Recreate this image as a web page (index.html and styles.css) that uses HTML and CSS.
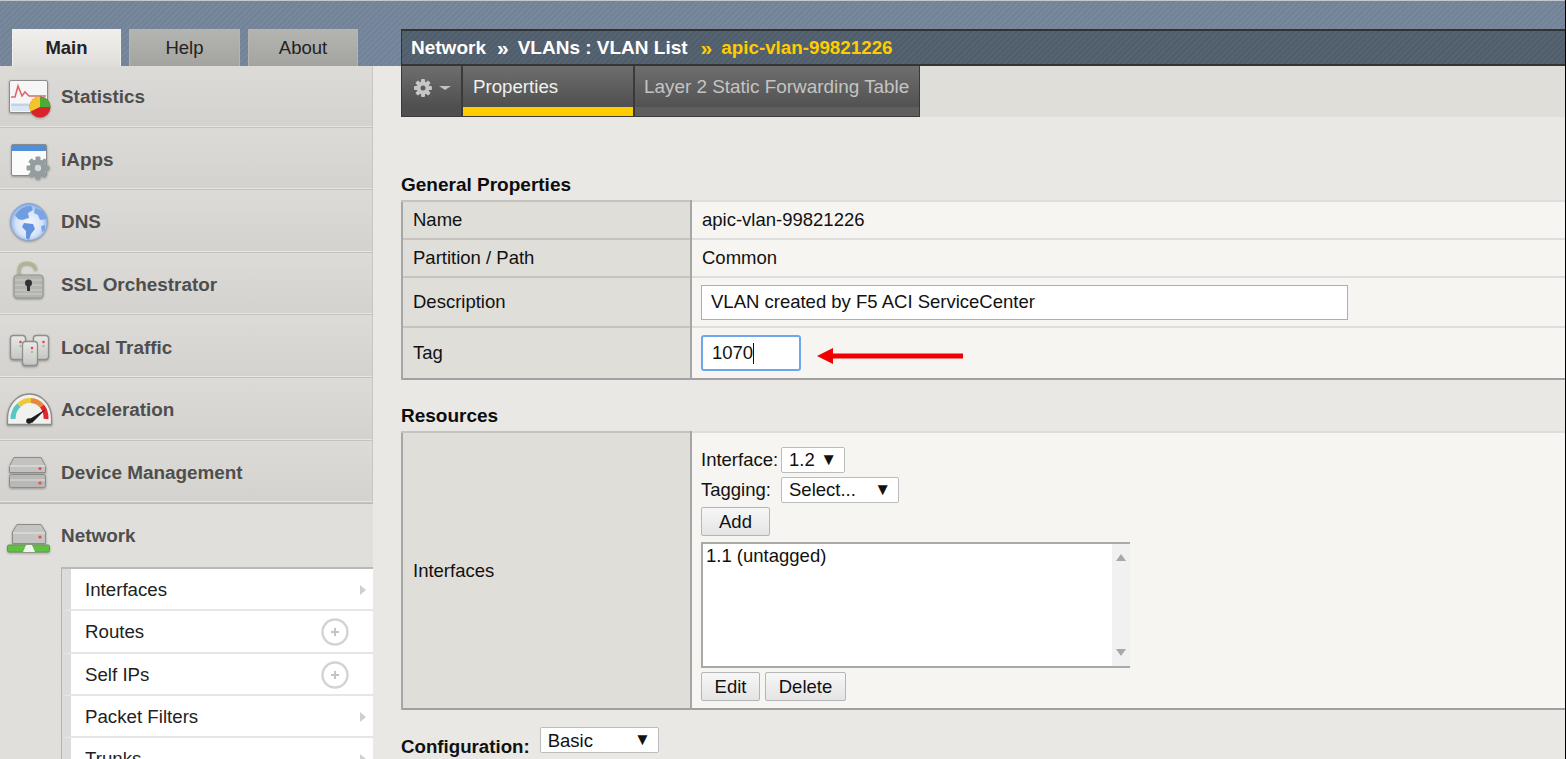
FILE: index.html
```html
<!DOCTYPE html>
<html lang="en">
<head>
  <meta charset="UTF-8"/>
  <title>Network : VLANs : VLAN List</title>
  <meta name="viewport" content="width=device-width, initial-scale=1.0"/>
  <link rel="stylesheet" href="styles.css">
</head>
<body>
  <div class="page">
    <!-- top band -->
    <div class="topbar">
      <div class="tabs">
        <div class="tab active">Main</div>
        <div class="tab">Help</div>
        <div class="tab last">About</div>
      </div>
      <div class="crumbs">
        <span>Network</span><span class="sep">&raquo;</span><span>VLANs : VLAN List</span><span class="sep cur">&raquo;</span><span class="cur name">apic-vlan-99821226</span>
      </div>
    </div>

    <div class="layout">
      <!-- left menu -->
      <div class="sidebar">
        <div class="nav-item">
          <svg class="nav-icon" width="56" height="56" viewBox="0 0 56 56">
            <rect x="5.5" y="11.5" width="38" height="32" rx="1.5" fill="#f6f6f6" stroke="#8d8d8d"/>
            <rect x="7" y="34" width="35" height="8" fill="#dbe6f2"/>
            <path d="M7 28 L11 28 L14 17 L18 27 L21 23 L25 27 L42 27" fill="none" stroke="#d9686c" stroke-width="1.6"/>
            <path d="M7 36 H30" stroke="#b9cde2" stroke-width="1.5"/>
            <circle cx="36" cy="38" r="10.5" fill="#d8232b"/>
            <path d="M36 38 L36 27.5 A10.5 10.5 0 0 1 46.5 38 Z" fill="#4cab34"/>
            <path d="M36 38 L36 27.5 A10.5 10.5 0 0 0 26.5 42.5 Z" fill="#f3c52c"/>
          </svg>
          <span>Statistics</span>
        </div>
        <div class="nav-item">
          <svg class="nav-icon" width="56" height="56" viewBox="0 0 56 56">
            <rect x="7.5" y="12.5" width="35" height="31" rx="1.5" fill="#fbfbfb" stroke="#8a8a8a"/>
            <rect x="8" y="13" width="34" height="6" fill="#4f8fd8"/>
            <g fill="#949e9e">
              <circle cx="34" cy="36" r="8.5"/>
              <rect x="31.5" y="24.5" width="5" height="23" rx="1"/>
              <rect x="22.5" y="33.5" width="23" height="5" rx="1"/>
              <rect x="31.5" y="24.5" width="5" height="23" rx="1" transform="rotate(45 34 36)"/>
              <rect x="31.5" y="24.5" width="5" height="23" rx="1" transform="rotate(-45 34 36)"/>
            </g>
            <circle cx="34" cy="36" r="3.2" fill="#d4d8d8"/>
          </svg>
          <span>iApps</span>
        </div>
        <div class="nav-item">
          <svg class="nav-icon" width="56" height="56" viewBox="0 0 56 56">
            <defs>
              <radialGradient id="globe" cx="50%" cy="55%" r="55%">
                <stop offset="0" stop-color="#f4f7fd"/>
                <stop offset="0.65" stop-color="#d5e3f8"/>
                <stop offset="1" stop-color="#7ea6e2"/>
              </radialGradient>
            </defs>
            <circle cx="25" cy="28" r="18.5" fill="url(#globe)" stroke="#8ba6cf"/>
            <path d="M11 21 Q17 12 27 12 L29 16 L24 19 L25 24 L18 26 L14 25 Z" fill="#6f9de2"/>
            <path d="M20 29 L29 30 L31 35 L27 40 L25 46 L22 44 L22 37 L18 33 Z" fill="#6393dc"/>
            <path d="M31 14 L39 17 L43 25 L36 26 L34 21 L30 19 Z" fill="#7aa5e5"/>
            <path d="M37 32 L41 31 L41 36 L38 38 Z" fill="#7aa5e5"/>
          </svg>
          <span>DNS</span>
        </div>
        <div class="nav-item">
          <svg class="nav-icon" width="56" height="56" viewBox="0 0 56 56">
            <path d="M15 19 V13 Q15 6 23 6 Q31 6 32 13" fill="none" stroke="#b3b58f" stroke-width="3"/>
            <rect x="10" y="18" width="29" height="23" rx="3" fill="#b4b4b1" stroke="#949492"/>
            <path d="M11 23 H38 M11 28 H38 M11 33 H38 M11 37 H38" stroke="#cdcdca"/>
            <circle cx="24.5" cy="26" r="3.5" fill="#333"/>
            <rect x="23" y="27" width="3" height="7" fill="#333"/>
          </svg>
          <span>SSL Orchestrator</span>
        </div>
        <div class="nav-item">
          <svg class="nav-icon" width="56" height="56" viewBox="0 0 56 56">
            <defs>
              <linearGradient id="srv" x1="0" y1="0" x2="0" y2="1">
                <stop offset="0" stop-color="#e8e8e6"/>
                <stop offset="1" stop-color="#c6c6c4"/>
              </linearGradient>
            </defs>
            <g fill="url(#srv)" stroke="#8e8e8c" stroke-width="1.3">
              <rect x="6.5" y="15.5" width="15" height="24" rx="3"/>
              <rect x="29.5" y="15.5" width="15" height="24" rx="3"/>
              <rect x="18.5" y="21.5" width="15" height="24" rx="3"/>
            </g>
            <g fill="#e8474b">
              <circle cx="16.5" cy="22" r="1.3"/><circle cx="39.5" cy="22" r="1.3"/><circle cx="28" cy="28" r="1.3"/>
            </g>
            <g fill="#7cc46a">
              <circle cx="16.5" cy="26" r="1"/><circle cx="39.5" cy="26" r="1"/><circle cx="28" cy="32" r="1"/>
            </g>
          </svg>
          <span>Local Traffic</span>
        </div>
        <div class="nav-item">
          <svg class="nav-icon" width="56" height="56" viewBox="0 0 56 56">
            <path d="M3.5 42.5 V36 A22 24 0 0 1 47.5 36 V42.5 Z" fill="#f1f1ef" stroke="#8c8c8a" stroke-width="1.3"/>
            <path d="M9 37 A16.5 18 0 0 1 15 23" fill="none" stroke="#57c7c2" stroke-width="5"/>
            <path d="M15 23 A16.5 18 0 0 1 27 18.5" fill="none" stroke="#ecc83a" stroke-width="5"/>
            <path d="M27 18.5 A16.5 18 0 0 1 38 24" fill="none" stroke="#e8883a" stroke-width="5"/>
            <path d="M38 24 A16.5 18 0 0 1 42 37" fill="none" stroke="#e3262b" stroke-width="5"/>
            <path d="M24 38 L42 27 L28 41 Z" fill="#1d1d1d"/>
            <circle cx="25" cy="39" r="2.8" fill="#1d1d1d"/>
          </svg>
          <span>Acceleration</span>
        </div>
        <div class="nav-item">
          <svg class="nav-icon" width="56" height="56" viewBox="0 0 56 56">
            <path d="M5.5 21 L10 12.5 H37 L41.5 21 V27.5 H5.5 Z" fill="#c2c2c0" stroke="#8b8b89"/>
            <path d="M5.5 21 H41.5" stroke="#e8e8e6"/>
            <rect x="5.5" y="29.5" width="36" height="13" rx="2" fill="#b8b8b6" stroke="#8b8b89"/>
            <path d="M6 35 H41" stroke="#dededc"/>
            <circle cx="36" cy="23.5" r="1.6" fill="#ee4a4e"/>
            <circle cx="36" cy="38" r="1.6" fill="#ee4a4e"/>
          </svg>
          <span>Device Management</span>
        </div>
        <div class="nav-item open">
          <svg class="nav-icon" width="56" height="56" viewBox="0 0 56 56">
            <path d="M8.5 24 L13 16.5 H37 L41.5 24 V35.5 H8.5 Z" fill="#c4c4c2" stroke="#8b8b89"/>
            <path d="M9 25 H41" stroke="#e8e8e6"/>
            <circle cx="36" cy="29" r="1.6" fill="#ee4a4e"/>
            <rect x="3.5" y="37" width="42" height="7" rx="1.5" fill="#5ec13f" stroke="#6c8f5c"/>
            <path d="M19 44 L22 37 H28 L31 44 Z" fill="#f2f2f0"/>
          </svg>
          <span>Network</span>
        </div>
        <div class="subnav">
          <div class="sub-item">Interfaces<span class="chev"></span></div>
          <div class="sub-item">Routes
            <svg class="plus" width="28" height="28" viewBox="0 0 28 28"><circle cx="14" cy="14" r="12.5" fill="none" stroke="#d3d3d3" stroke-width="2.4"/><path d="M14 10 V18 M10 14 H18" stroke="#c4c4c4" stroke-width="2"/></svg>
          </div>
          <div class="sub-item">Self IPs
            <svg class="plus" width="28" height="28" viewBox="0 0 28 28"><circle cx="14" cy="14" r="12.5" fill="none" stroke="#d3d3d3" stroke-width="2.4"/><path d="M14 10 V18 M10 14 H18" stroke="#c4c4c4" stroke-width="2"/></svg>
          </div>
          <div class="sub-item">Packet Filters<span class="chev"></span></div>
          <div class="sub-item">Trunks<span class="chev"></span></div>
        </div>
      </div>

      <!-- content -->
      <div class="main">
        <div class="toolbar">
          <div class="tool gear">
            <svg width="22" height="22" viewBox="0 0 22 22">
              <g fill="#c6c6c6">
                <circle cx="11" cy="11" r="6.5"/>
                <rect x="9" y="2" width="4" height="18" rx="1"/>
                <rect x="2" y="9" width="18" height="4" rx="1"/>
                <rect x="9" y="2" width="4" height="18" rx="1" transform="rotate(45 11 11)"/>
                <rect x="9" y="2" width="4" height="18" rx="1" transform="rotate(-45 11 11)"/>
              </g>
              <circle cx="11" cy="11" r="2.5" fill="#5d5d5d"/>
            </svg>
            <span class="caret"></span>
          </div>
          <div class="tool tool-tab selected">Properties</div>
          <div class="tool tool-tab dim">Layer 2 Static Forwarding Table</div>
        </div>

        <h2 class="section first">General Properties</h2>
        <table class="props">
          <tr class="r-name"><th>Name</th><td class="plain">apic-vlan-99821226</td></tr>
          <tr class="r-path"><th>Partition / Path</th><td class="plain">Common</td></tr>
          <tr class="r-desc"><th>Description</th><td><input class="text-input" type="text" value="VLAN created by F5 ACI ServiceCenter"></td></tr>
          <tr class="r-tag">
            <th>Tag</th>
            <td>
              <div class="tag-row">
                <div class="tag-input">1070<span class="cursor"></span></div>
                <svg class="arrow" width="146" height="16" viewBox="0 0 146 16"><path d="M0 8 L16 0 V5.5 H146 V10.5 H16 V16 Z" fill="#f00000"/></svg>
              </div>
            </td>
          </tr>
        </table>

        <h2 class="section">Resources</h2>
        <table class="props">
          <tr class="r-ifaces">
            <th>Interfaces</th>
            <td>
              <div class="field-row">
                <span class="field-label">Interface:</span>
                <div class="select narrow">1.2<span class="drop">&#9660;</span></div>
              </div>
              <div class="field-row">
                <span class="field-label">Tagging:</span>
                <div class="select medium">Select...<span class="drop">&#9660;</span></div>
              </div>
              <button class="btn add">Add</button>
              <div class="listbox">
                <div class="list-text">1.1 (untagged)</div>
                <div class="scroll"><span class="up"></span><span class="down"></span></div>
              </div>
              <div class="btn-row">
                <button class="btn edit">Edit</button>
                <button class="btn del">Delete</button>
              </div>
            </td>
          </tr>
        </table>

        <div class="config">
          <span class="config-label">Configuration:</span>
          <div class="select wide"><span class="wide-text">Basic</span><span class="drop">&#9660;</span></div>
        </div>
      </div>
    </div>
  </div>
</body>
</html>
```

FILE: styles.css
```css
html, body {
  margin: 0;
  height: 100%;
  overflow: hidden;
}
body {
  font-family: "Liberation Sans", Arial, sans-serif;
  background-color: #e9e8e4;
  color: #111;
}
.page {
  height: 759px;
  overflow: hidden;
  border-right: 1px solid #000;
}

/* top band */
.topbar {
  display: flex;
  height: 66px;
  box-sizing: border-box;
  padding-top: 28px;
  border-top: 1px solid #c4c8cc;
  background-color: #74859a;
  background-image: repeating-linear-gradient(135deg, rgba(255,255,255,0.03) 0 2px, rgba(0,0,0,0.02) 2px 4px);
}
.tabs {
  display: flex;
  width: 401px;
  padding-left: 12px;
  box-sizing: border-box;
  align-items: flex-end;
  gap: 8px;
}
.tab {
  width: 111px;
  height: 37px;
  box-sizing: border-box;
  border: 1px solid #b4b5b2;
  border-bottom: none;
  background: linear-gradient(#b4b5b0, #a3a49f);
  color: #222;
  font-size: 18.5px;
  line-height: 35px;
  text-align: center;
}
.tab.last {
  width: 110px;
}
.tab.active {
  width: 109px;
  background: linear-gradient(#f0efed, #dfdeda);
  border-color: #f0efed;
  font-weight: bold;
}
.crumbs {
  flex: 1;
  display: flex;
  align-items: center;
  box-sizing: border-box;
  padding-left: 9px;
  border-top: 2px solid #333;
  border-bottom: 2px solid #353535;
  border-left: 1px solid #333;
  background-color: #53606e;
  background-image: repeating-linear-gradient(135deg, rgba(255,255,255,0.02) 0 2px, rgba(0,0,0,0.03) 2px 4px);
  color: #fff;
  font-size: 19px;
  font-weight: bold;
}
.crumbs .sep {
  margin: 0 9px 0 11px;
  font-size: 21px;
  line-height: 20px;
}
.crumbs .sep.cur {
  margin: 0 9px 0 13px;
}
.crumbs .cur {
  color: #ffcc00;
}
.crumbs .name {
  font-size: 18.8px;
}

.layout {
  display: flex;
}

/* left menu */
.sidebar {
  width: 373px;
  flex: none;
  background: #e0dfdb;
}
.nav-item {
  display: flex;
  align-items: center;
  height: 62.6px;
  box-sizing: border-box;
  padding: 3px 0 0 4px;
  gap: 1px;
  color: #4e4e4e;
  font-size: 18.9px;
  font-weight: bold;
  background: linear-gradient(#dcdbd7, #d3d2ce);
  border-bottom: 1px solid #c3c2be;
  border-right: 1px solid #c8c7c3;
  box-shadow: inset 0 -1px 0 #e6e5e1;
}
.nav-item:first-child {
  height: 61.6px;
  padding-top: 1px;
}
.nav-item.open {
  height: 64px;
  padding-top: 0;
  background: #e0dfdb;
  border-bottom: none;
  border-right: none;
  box-shadow: none;
  border-top: 1px solid #bcbbb7;
}
.nav-icon {
  flex: none;
  filter: drop-shadow(0 1px 1px rgba(0,0,0,0.3));
}
.subnav {
  margin-left: 61px;
  background: #fff;
  border-top: 2px solid #b9b9b5;
  border-left: 1px solid #b4b4b4;
}
.sub-item {
  display: flex;
  align-items: center;
  justify-content: space-between;
  height: 42.2px;
  box-sizing: border-box;
  padding: 2px 7px 0 14px;
  border-left: 9px solid #dcdcdc;
  border-bottom: 2px solid #e6e6e4;
  color: #222;
  font-size: 18.7px;
}
.chev {
  width: 0;
  height: 0;
  border-left: 6px solid #cfcfcf;
  border-top: 5px solid transparent;
  border-bottom: 5px solid transparent;
}
.plus {
  margin-right: 17px;
}

/* content */
.main {
  flex: 1;
  margin-left: 28px;
  min-width: 0;
}
.toolbar {
  display: flex;
  height: 51px;
  background: #dfded9;
}
.tool {
  box-sizing: border-box;
  height: 51px;
  border: 1px solid #3a3a3a;
  border-top: none;
  border-left: none;
  background: linear-gradient(#6e6e6e 0, #4f4f4f 41px);
}
.gear {
  display: flex;
  align-items: center;
  gap: 5px;
  width: 61px;
  padding: 0 0 6px 10px;
  border-left: 1px solid #3a3a3a;
}
.caret {
  width: 0;
  height: 0;
  border-top: 4px solid #c0c0c0;
  border-left: 6px solid transparent;
  border-right: 6px solid transparent;
}
.tool-tab {
  font-size: 18.7px;
  line-height: 42px;
  padding-left: 10px;
  color: #f0f0f0;
  border-left: 1px solid #3a3a3a;
}
.selected {
  width: 172px;
  box-shadow: inset 0 -9px 0 #ffcc00;
}
.dim {
  width: 286px;
  padding-left: 9px;
  font-size: 18.9px;
  color: #c4c4c4;
  background: linear-gradient(#6e6e6e 0, #525252 41px, #5f5f5f 41px);
}

.section {
  margin: 26px 0 5px;
  font-size: 19px;
  line-height: 20px;
  font-weight: bold;
  color: #0c0c0c;
}
.section.first {
  margin-top: 58px;
}
.props {
  width: 100%;
  border-collapse: collapse;
  table-layout: fixed;
  font-size: 18.5px;
  border-top: 2px solid #a0a0a0;
  border-bottom: 2px solid #a0a0a0;
}
.props th {
  width: 289px;
  box-sizing: border-box;
  padding: 0 0 0 10px;
  text-align: left;
  font-weight: normal;
  background: #dfded9;
  border-left: 2px solid #a6a6a6;
  border-right: 2px solid #a6a6a6;
  border-top: 2px solid #c4c3bf;
}
.props td {
  padding: 0 0 0 9px;
  background: #f6f5f2;
  border-top: 2px solid #dedddb;
}
.props td.plain {
  padding-left: 10px;
}
.r-name th, .r-name td { height: 36px; }
.r-path th, .r-path td { height: 36px; }
.r-desc th, .r-desc td { height: 48px; }
.r-tag th, .r-tag td { height: 50px; }
.r-ifaces th, .r-ifaces td { height: 277px; }
.r-ifaces td {
  vertical-align: top;
  padding-top: 14px;
  box-sizing: border-box;
}

.text-input {
  display: block;
  width: 647px;
  height: 35px;
  box-sizing: border-box;
  padding: 0 9px;
  border: 1px solid #adadad;
  background: #fff;
  font: inherit;
  color: #111;
}
.tag-row {
  display: flex;
  align-items: center;
  gap: 16px;
}
.tag-input {
  width: 100px;
  height: 36px;
  box-sizing: border-box;
  padding-left: 9px;
  border: 2px solid #6ea5ee;
  border-radius: 3px;
  background: #fff;
  line-height: 32px;
}
.cursor {
  display: inline-block;
  width: 1px;
  height: 21px;
  background: #111;
  vertical-align: -5px;
}
.arrow {
  display: block;
  margin-top: 5px;
}

.field-row {
  display: flex;
  align-items: center;
  height: 26px;
  margin-bottom: 4px;
}
.field-label {
  width: 80px;
  flex: none;
}
.select {
  display: flex;
  align-items: center;
  justify-content: space-between;
  height: 26px;
  box-sizing: border-box;
  padding: 0 7px 0 7px;
  border: 1px solid #bcbcbc;
  border-radius: 2px;
  background: #fff;
  font-size: 18.5px;
}
.drop {
  font-size: 17px;
}
.narrow { width: 64px; }
.medium { width: 118px; }
.wide { width: 119px; }
.wide-text {
  padding-top: 2px;
}
.btn {
  display: block;
  height: 29px;
  box-sizing: border-box;
  padding: 0;
  border: 1px solid #b5b5b5;
  border-radius: 2px;
  background: linear-gradient(#f7f7f7, #e4e4e4);
  color: #111;
  font: inherit;
}
.add { width: 69px; }
.edit { width: 59px; }
.del { width: 81px; }
.listbox {
  display: flex;
  width: 429px;
  height: 126px;
  margin: 6px 0 4px;
  box-sizing: border-box;
  border: 2px solid #a9a9a9;
  border-right: none;
  background: #fff;
}
.list-text {
  flex: 1;
  padding: 1px 0 0 3px;
  line-height: 22px;
}
.scroll {
  display: flex;
  flex-direction: column;
  justify-content: space-between;
  align-items: center;
  width: 18px;
  padding: 10px 0;
  box-sizing: border-box;
  background: #f1f1f1;
}
.up, .down {
  width: 0;
  height: 0;
  border-left: 5px solid transparent;
  border-right: 5px solid transparent;
}
.up { border-bottom: 7px solid #a8a8a8; }
.down { border-top: 7px solid #a8a8a8; }
.btn-row {
  display: flex;
  gap: 5px;
}
.config {
  display: flex;
  align-items: flex-end;
  gap: 10px;
  margin-top: 17px;
}
.config-label {
  font-size: 18.7px;
  font-weight: bold;
  margin-bottom: -5px;
}
```
